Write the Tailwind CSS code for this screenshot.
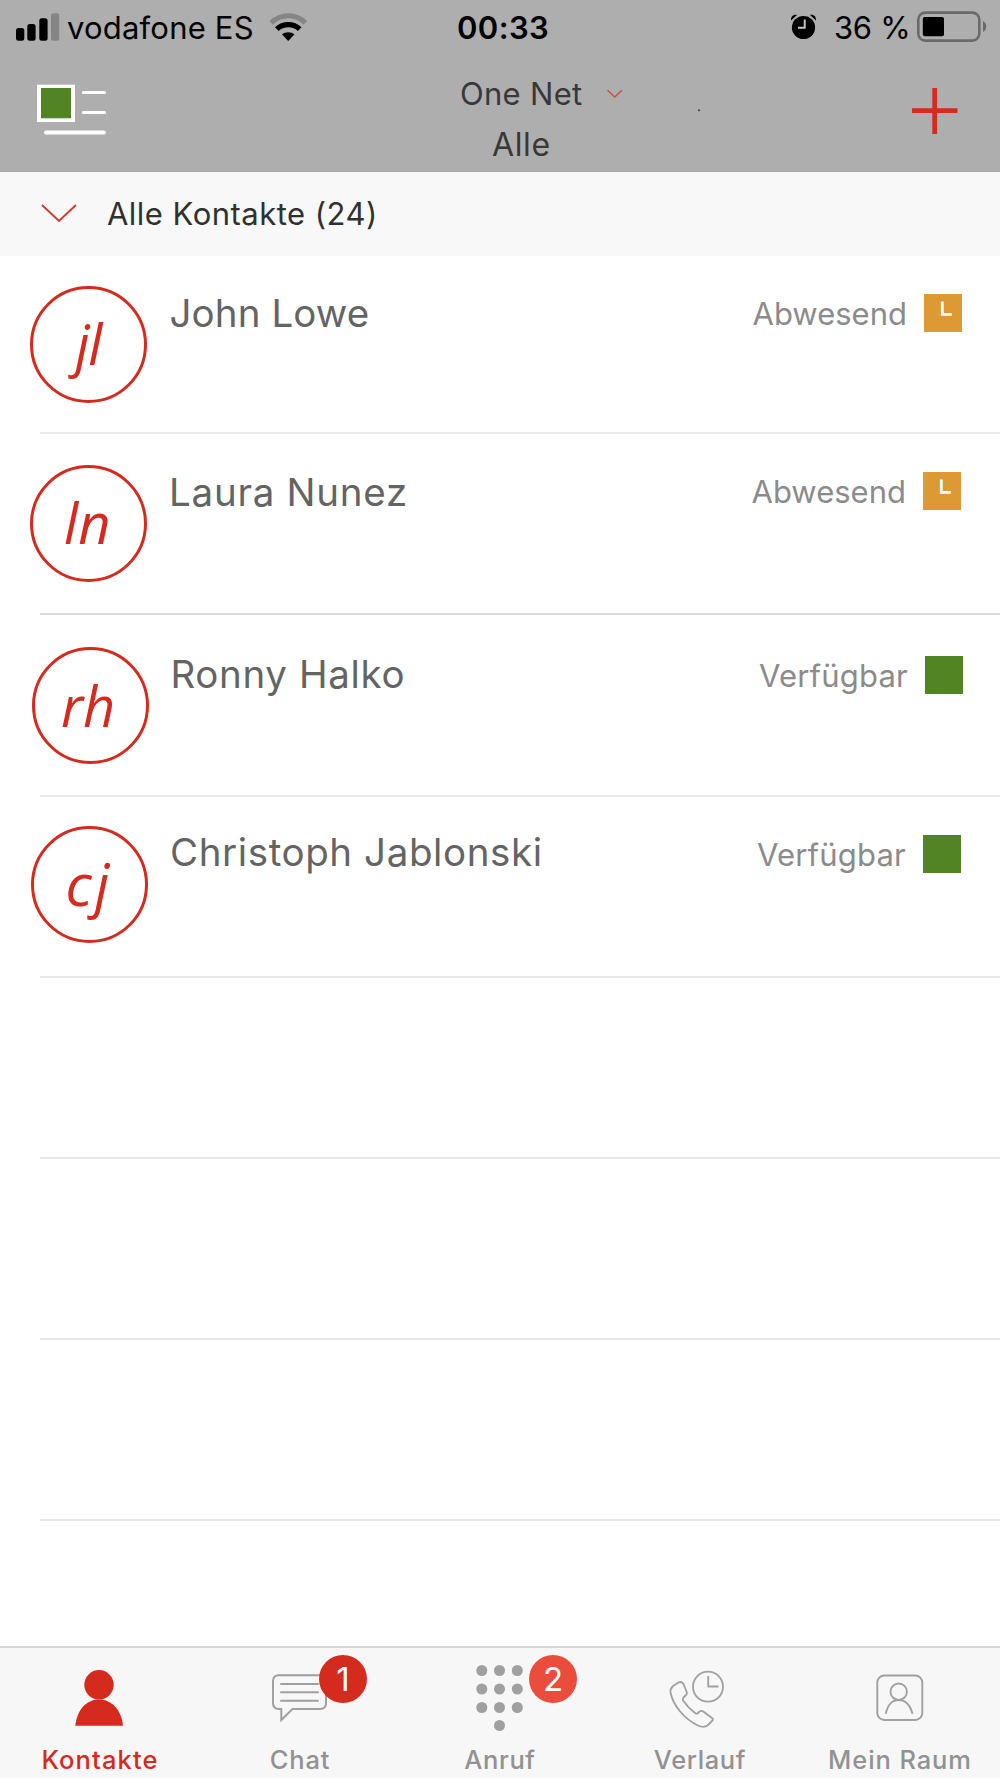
<!DOCTYPE html>
<html lang="de">
<head>
<meta charset="utf-8">
<title>Kontakte</title>
<script src="https://cdn.jsdelivr.net/npm/@tailwindcss/browser@4"></script>
</head>
<body class="w-[1000px] h-[1778px] overflow-hidden bg-white font-['Inter',sans-serif] flex flex-col whitespace-nowrap">

<header class="h-[172px] shrink-0 bg-[#aeaeae] border-b border-[#a8a8a8] flex flex-col">
  <!-- status bar -->
  <div class="h-[56px] flex items-center text-[31px] leading-[56px] text-black">
    <div class="w-[457px] flex items-center pl-4">
      <svg class="w-[44px] h-[56px]" viewBox="0 0 44 56"><rect x="0" y="28" width="8.3" height="12.7" rx="2.5"/><rect x="11.3" y="24" width="8.3" height="16.7" rx="2.5"/><rect x="23.3" y="18.3" width="8.3" height="22.4" rx="2.5"/><rect x="35" y="13.3" width="8.3" height="27.4" rx="2.5" fill="#858585"/></svg>
      <span class="ml-[7px] tracking-[0.2px]">vodafone ES</span>
      <svg class="ml-[15px] w-[40px] h-[56px]" viewBox="0 0 40 56" fill="none"><path d="M2.2 22.8 C12 13.4 27 13.4 36.3 22.8" stroke="#858585" stroke-width="5.2"/><path d="M7.8 29.200 C14 23.2 24.500 23.2 30.700 29.200" stroke="#000" stroke-width="5.2"/><path d="M19.2 41 L13 34.3 C16.500 31.5 22 31.5 25.5 34.3 Z" fill="#000"/></svg>
    </div>
    <div class="w-[333px] font-semibold tracking-[0.4px]">00:33</div>
    <svg class="w-[28px] h-[56px]" viewBox="0 0 28 56"><circle cx="13.5" cy="27.5" r="11.6"/><path d="M1 20.5 C0.6 16.5 3.5 14 7 15 Z M26 20.5 C26.4 16.5 23.5 14 20 15 Z"/><path d="M14.7 19.5 V27.8 H8" fill="none" stroke="#c4c4c4" stroke-width="2"/></svg>
    <span class="ml-4 tracking-[-0.3px]">36 %</span>
    <svg class="ml-auto mr-[12px] w-[72px] h-[56px]" viewBox="0 0 72 56"><rect x="2.3" y="12.6" width="61" height="28" rx="7" fill="none" stroke="#6a6a6a" stroke-width="2.6"/><rect x="6.8" y="17" width="21.2" height="19.3" rx="2"/><path d="M67 21 C71.3 23 71.3 30 67 32 Z" fill="#6a6a6a"/></svg>
  </div>
  <!-- navigation bar -->
  <div class="flex h-[115px]">
    <svg class="w-[460px] h-[115px]" viewBox="0 0 460 115"><rect x="37" y="28.7" width="38" height="37.3" fill="#fff"/><rect x="41" y="32" width="30" height="30.3" fill="#528423"/><path d="M83.3 36.5 H104.5 M83.3 56.5 H104.5" stroke="#fff" stroke-width="3.2" stroke-linecap="round"/><path d="M46 76.6 H104" stroke="#fff" stroke-width="4" stroke-linecap="round"/></svg>
    <div class="w-[123px] pt-3 text-[31px] leading-[51px] text-[#383838]">
      <div class="tracking-[0.3px]">One Net</div>
      <div class="pl-[32px] text-[32px] tracking-[0.6px]">Alle</div>
    </div>
    <svg class="w-[417px] h-[115px]" viewBox="0 0 417 115" fill="none"><path d="M24.5 34.2 L31.7 41 L39 34.2" stroke="#d14c45" stroke-width="1.5"/><circle cx="116" cy="54.3" r="1.1" fill="#444"/><path d="M329 54.7 H374.5 M351.7 32 V78" stroke="#d52b1e" stroke-width="4.8"/></svg>
  </div>
</header>

<section class="h-[84px] shrink-0 bg-[#f8f8f8] flex items-center">
  <svg class="ml-[41px] w-[36px] h-[84px]" viewBox="0 0 36 84" fill="none"><path d="M1 33 L18 49 L35 33" stroke="#d83a30" stroke-width="2"/></svg>
  <h1 class="ml-[30px] text-[31px] leading-[84px] tracking-[0.48px] text-[#303030]">Alle Kontakte (24)</h1>
</section>

<main class="grow flex flex-col pl-[40px] text-[#646464]">
  <div class="h-[178px] border-b-2 border-[#e8e8e8] flex">
    <div class="-ml-[10px] mt-[30px] size-[117px] rounded-full border-3 border-[#d52b1e] pl-[42.5px] font-['Open_Sans',sans-serif] italic text-[56px] leading-[109px] tracking-[-1.5px] text-[#d52b1e]">jl</div>
    <h2 class="ml-[22.5px] mt-[38px] leading-[38px] text-[38.5px] tracking-[0.1px]">John Lowe</h2>
    <div class="ml-auto mr-[38px] mt-[38px] h-[38px] flex items-center gap-[17px] text-[31px] leading-[40px] text-[#8b8b8b]"><span class="pt-[2px]">Abwesend</span><svg class="size-[38px]" viewBox="0 0 38 38"><path fill="#dd9933" d="M0 0h38v38H0z"/><path d="M18.3 7.5 V20.3 H27.8" fill="none" stroke="#fff" stroke-width="2.8"/></svg></div>
  </div>
  <div class="h-[181px] border-b-2 border-[#dcdcdc] flex">
    <div class="-ml-[10px] mt-[30.5px] size-[117px] rounded-full border-3 border-[#d52b1e] pl-[31px] font-['Open_Sans',sans-serif] italic text-[56px] leading-[109px] text-[#d52b1e]">ln</div>
    <h2 class="ml-[22px] mt-[39px] leading-[38px] text-[38.5px] tracking-[0.75px]">Laura Nunez</h2>
    <div class="ml-auto mr-[39px] mt-[38px] h-[38px] flex items-center gap-[17px] text-[31px] leading-[40px] text-[#8b8b8b]"><span class="pt-[2px]">Abwesend</span><svg class="size-[38px]" viewBox="0 0 38 38"><path fill="#dd9933" d="M0 0h38v38H0z"/><path d="M18.3 7.5 V20.3 H27.8" fill="none" stroke="#fff" stroke-width="2.8"/></svg></div>
  </div>
  <div class="h-[182px] border-b-2 border-[#e9e9e9] flex">
    <div class="-ml-[8px] mt-[31.5px] size-[117px] rounded-full border-3 border-[#d52b1e] pl-[26px] font-['Open_Sans',sans-serif] italic text-[56px] leading-[110px] text-[#d52b1e]">rh</div>
    <h2 class="ml-[21.5px] mt-[40px] leading-[38px] text-[38.5px] tracking-[0.65px]">Ronny Halko</h2>
    <div class="ml-auto mr-[37px] mt-[41px] h-[38px] flex items-center gap-[17px] text-[31px] leading-[40px] text-[#8b8b8b] tracking-[0.2px]"><span class="pt-px">Verfügbar</span><i class="size-[38px] bg-[#528423]"></i></div>
  </div>
  <div class="h-[181px] border-b-2 border-[#e6e6e6] flex">
    <div class="-ml-[9px] mt-[28.5px] size-[117px] rounded-full border-3 border-[#d52b1e] pl-[31.5px] font-['Open_Sans',sans-serif] italic text-[58px] leading-[109px] tracking-[3px] text-[#d52b1e]">cj</div>
    <h2 class="ml-[22px] mt-[36px] leading-[38px] text-[38.5px] tracking-[0.6px]">Christoph Jablonski</h2>
    <div class="ml-auto mr-[39px] mt-[38px] h-[38px] flex items-center gap-[17px] text-[31px] leading-[40px] text-[#8b8b8b] tracking-[0.2px]"><span class="pt-px">Verfügbar</span><i class="size-[38px] bg-[#528423]"></i></div>
  </div>
  <div class="h-[181px] border-b-2 border-[#e6e6e6]"></div>
  <div class="h-[181px] border-b-2 border-[#e6e6e6]"></div>
  <div class="h-[181px] border-b-2 border-[#e6e6e6]"></div>
</main>

<nav class="h-[132px] shrink-0 bg-[#f7f7f7] border-t-2 border-[#d4d4d4] grid grid-cols-5 text-center text-[25.5px] leading-[30px] font-medium text-[#929292]">
  <div class="text-[#d52b1e]">
    <svg class="w-[200px] h-[97px]" viewBox="0 0 200 97" fill="#d52b1e"><circle cx="99" cy="36.8" r="14.7"/><path d="M75.3 77.7 C77 62 86 51.5 99 51.5 C112 51.5 121.500 62 123 77.700 Z"/></svg>
    <div class="tracking-[1.1px]">Kontakte</div>
  </div>
  <div class="relative">
    <svg class="w-[200px] h-[97px]" viewBox="0 0 200 97" fill="none" stroke="#a0a0a0" stroke-width="2"><path d="M79 27.200 H120 Q126 27.200 126 33.200 V55 Q126 61 120 61 H92.500 L81.300 72 V61 H79 Q73 61 73 55 V33.200 Q73 27.200 79 27.200 Z"/><path d="M81 36 H118 M81 44.300 H118 M81 52.700 H118" stroke-linecap="round"/></svg>
    <div class="tracking-[0.83px]">Chat</div>
    <span class="absolute left-[119px] top-[7px] size-12 rounded-full bg-[#d52b1e] text-white text-[33px] leading-12 font-normal">1</span>
  </div>
  <div class="relative">
    <svg class="w-[200px] h-[97px]" viewBox="0 0 200 97" fill="#a0a0a0"><circle cx="81.800" cy="22.500" r="5.500"/><circle cx="99.500" cy="22.500" r="5.500"/><circle cx="117.300" cy="22.500" r="5.500"/><circle cx="81.800" cy="41" r="5.500"/><circle cx="99.500" cy="41" r="5.500"/><circle cx="117.300" cy="41" r="5.500"/><circle cx="81.800" cy="59.500" r="5.500"/><circle cx="99.500" cy="59.500" r="5.500"/><circle cx="117.300" cy="59.500" r="5.500"/><circle cx="99.500" cy="77.500" r="5.500"/></svg>
    <div class="tracking-[0.6px]">Anruf</div>
    <span class="absolute left-[129px] top-[7px] size-12 rounded-full bg-[#eb4d3d] text-white text-[33px] leading-12 font-normal">2</span>
  </div>
  <div>
    <svg class="w-[200px] h-[97px]" viewBox="0 0 200 97" fill="none" stroke="#a0a0a0" stroke-width="1.8" stroke-linejoin="round"><circle cx="108" cy="38.700" r="15"/><path d="M108.200 28 V38.500 H118.500"/><path d="M78.500 34.500 L73 38 Q70 41 70.500 44.500 C73 57 84 71 98 77.500 Q104 80.500 108 77 L112.500 72.500 Q113.500 71 112 70 L104 64 Q101.500 62 99.500 63.500 L97.500 65.500 Q96 66 94.500 64.500 C89 60.500 85.500 56 83 52.500 Q82.300 51 83.500 49.500 L86.500 46.500 Q87.300 45 86.500 43.500 L83.500 36 Q81.500 33 78.500 34.500 Z"/></svg>
    <div class="tracking-[0.64px]">Verlauf</div>
  </div>
  <div>
    <svg class="w-[200px] h-[97px]" viewBox="0 0 200 97" fill="none" stroke="#a0a0a0" stroke-width="1.900"><rect x="77.300" y="27.500" width="45" height="44.500" rx="7"/><circle cx="98.700" cy="43.700" r="8.200"/><path d="M85.700 65.800 C88 56.500 91.500 52 98.700 52 C106 52 110 56.500 112.500 65.800"/></svg>
    <div class="tracking-[0.9px]">Mein Raum</div>
  </div>
</nav>
</body>
</html>
